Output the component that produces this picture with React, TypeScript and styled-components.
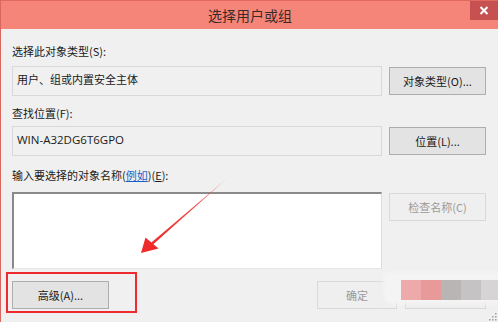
import React from "react";
import styled, { createGlobalStyle } from "styled-components";

const GlobalStyle = createGlobalStyle`
  html, body {
    margin: 0;
    padding: 0;
    background: #f0f0f0;
    overflow: hidden;
  }
  body {
    font-family: "Noto Sans CJK SC", "Liberation Sans", sans-serif;
  }
`;

const Window = styled.div`
  position: relative;
  width: 498px;
  height: 322px;
  box-sizing: border-box;
  background: #f0f0f0;
  border-left: 1px solid #d8675e;
  overflow: hidden;
`;

const TitleBar = styled.div`
  position: relative;
  height: 29px;
  box-sizing: border-box;
  background: #f68579;
  border-top: 1px solid #e06a60;
  display: flex;
  align-items: center;
  justify-content: center;
`;

const Title = styled.div`
  font-size: 14px;
  color: #3a2a28;
  margin-left: 1px;
`;

const CloseButton = styled.div`
  position: absolute;
  top: 0;
  right: 0;
  width: 28px;
  height: 19px;
  background: #c75050;
  display: flex;
  align-items: center;
  justify-content: center;
`;

const Body = styled.div`
  padding: 14px 11px 0 11px;
  display: flex;
  flex-direction: column;
`;

const Label = styled.div<{ $gap: number }>`
  font-size: 11px;
  line-height: 16px;
  color: #1a1a1a;
  height: 16px;
  margin-bottom: ${(p) => p.$gap}px;
`;

const Row = styled.div<{ $gap: number; $align?: string }>`
  display: grid;
  grid-template-columns: 370px 97px;
  column-gap: 7px;
  align-items: ${(p) => p.$align || "center"};
  margin-bottom: ${(p) => p.$gap}px;
`;

const Field = styled.div`
  height: 30px;
  box-sizing: border-box;
  border: 1px solid #d9d9d9;
  background: #f0f0f0;
  padding: 0 0 0 4px;
  font-size: 11px;
  line-height: 24px;
  color: #1a1a1a;
`;

const FieldLatin = styled.span`
  font-family: "Open Sans", "Liberation Sans", sans-serif;
  font-size: 11.5px;
`;

const Button = styled.div<{ $disabled?: boolean }>`
  height: 28px;
  box-sizing: border-box;
  border: 1px solid ${(p) => (p.$disabled ? "#d9d9d9" : "#adadad")};
  background: ${(p) => (p.$disabled ? "#efefef" : "#e3e3e3")};
  color: ${(p) => (p.$disabled ? "#9a9a9a" : "#1a1a1a")};
  font-size: 11px;
  display: flex;
  align-items: center;
  justify-content: center;
`;

const TextArea = styled.div`
  height: 77px;
  box-sizing: border-box;
  background: #ffffff;
  border-top: 2px solid #8a8a8a;
  border-left: 2px solid #8a8a8a;
  border-right: 1px solid #dcdcdc;
  border-bottom: 1px solid #e6e6e6;
`;

const Link = styled.span`
  color: #1a5fc8;
  text-decoration: underline;
`;

const Key = styled.span`
  text-decoration: underline;
`;

const Footer = styled.div`
  display: flex;
  align-items: center;
  margin-top: 12px;
`;

const FooterButton = styled(Button)<{ $w: number; $ml?: number }>`
  width: ${(p) => p.$w}px;
  height: 28px;
  margin-left: ${(p) => p.$ml || 0}px;
`;

const HighlightBox = styled.div`
  position: absolute;
  left: 5px;
  top: 272px;
  width: 131px;
  height: 41px;
  box-sizing: border-box;
  border: 2px solid #ec2a30;
`;

const Watermark = styled.div`
  position: absolute;
  left: 382px;
  top: 272px;
  width: 116px;
  height: 32px;
  background: #f4f4f4;
  border-radius: 6px 0 0 10px;
  filter: blur(2px);
`;

const Swatches = styled.div`
  position: absolute;
  left: 400px;
  top: 280px;
  display: flex;
`;

const Swatch = styled.div<{ $c: string; $w: number }>`
  width: ${(p) => p.$w}px;
  height: 20px;
  background: ${(p) => p.$c};
`;

const Grip = styled.svg`
  position: absolute;
  right: 1px;
  bottom: 1px;
`;

const ArrowLayer = styled.svg`
  position: absolute;
  left: 0;
  top: 0;
  pointer-events: none;
`;

export default function App() {
  return (
    <>
      <GlobalStyle />
      <Window>
        <TitleBar>
          <Title>选择用户或组</Title>
          <CloseButton>
            <svg width="10" height="9" viewBox="0 0 10 9">
              <path d="M1.5 1 L8.5 8 M8.5 1 L1.5 8" stroke="#ffffff" strokeWidth="2" />
            </svg>
          </CloseButton>
        </TitleBar>

        <Body>
          <Label $gap={7}>选择此对象类型(S):</Label>
          <Row $gap={9}>
            <Field>用户、组或内置安全主体</Field>
            <Button>对象类型(O)...</Button>
          </Row>

          <Label $gap={5}>查找位置(F):</Label>
          <Row $gap={11}>
            <Field>
              <FieldLatin>WIN-A32DG6T6GPO</FieldLatin>
            </Field>
            <Button>位置(L)...</Button>
          </Row>

          <Label $gap={9}>
            输入要选择的对象名称(<Link>例如</Link>)(<Key>E</Key>):
          </Label>
          <Row $gap={0} $align="start">
            <TextArea />
            <Button $disabled style={{ marginTop: 1 }}>
              检查名称(C)
            </Button>
          </Row>

          <Footer>
            <FooterButton $w={97}>高级(A)...</FooterButton>
            <FooterButton $w={80} $ml={208} $disabled>
              确定
            </FooterButton>
            <FooterButton $w={81} $ml={8} $disabled>
              取消
            </FooterButton>
          </Footer>
        </Body>

        <HighlightBox />
        <Watermark />
        <Swatches>
          <Swatch $c="#eeaaaa" $w={20} />
          <Swatch $c="#e89a9a" $w={20} />
          <Swatch $c="#b9b5b5" $w={20} />
          <Swatch $c="#c5c3c3" $w={20} />
          <Swatch $c="#d6d4d4" $w={18} />
        </Swatches>

        <Grip width="9" height="9" viewBox="0 0 9 9">
          <rect x="7" y="1" width="1.5" height="1.5" fill="#a0a0a0" />
          <rect x="4" y="4" width="1.5" height="1.5" fill="#a0a0a0" />
          <rect x="7" y="4" width="1.5" height="1.5" fill="#a0a0a0" />
          <rect x="1" y="7" width="1.5" height="1.5" fill="#a0a0a0" />
          <rect x="4" y="7" width="1.5" height="1.5" fill="#a0a0a0" />
          <rect x="7" y="7" width="1.5" height="1.5" fill="#a0a0a0" />
        </Grip>

        <ArrowLayer width="498" height="322" viewBox="0 0 498 322">
          <defs>
            <linearGradient id="arrowFade" x1="230" y1="175" x2="150" y2="245" gradientUnits="userSpaceOnUse">
              <stop offset="0" stopColor="#f26060" stopOpacity="0.4" />
              <stop offset="0.4" stopColor="#f03a3a" stopOpacity="0.9" />
              <stop offset="1" stopColor="#ee2a2a" stopOpacity="1" />
            </linearGradient>
          </defs>
          <path d="M230 175 L229 175.8 L152 244.5 L150.4 242.6 Z" fill="url(#arrowFade)" />
          <path d="M140 253 L144.5 237.5 L157.5 248.5 Z" fill="#ee2a2a" />
        </ArrowLayer>
      </Window>
    </>
  );
}
